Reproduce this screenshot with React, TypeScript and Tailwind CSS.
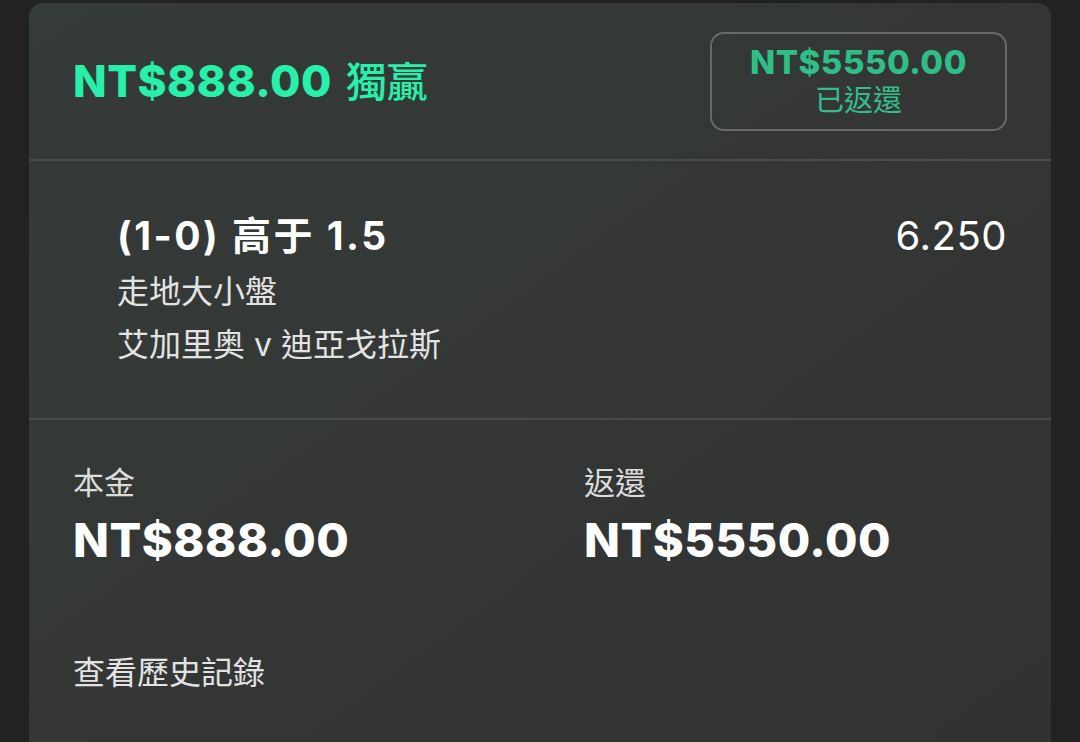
const latin = "font-['Inter','Noto_Sans_CJK_TC',sans-serif]"

export default function App() {
  return (
    <div className="min-h-[742px] w-[1080px] overflow-hidden bg-[#222222] pt-[3px]">
      <div
        className={`mx-[29px] min-h-[739px] rounded-t-[14px] bg-gradient-to-br from-[#353b39] to-[#323232] ${latin}`}
      >
        {/* header */}
        <div className="flex h-[156px] items-center justify-between pl-[44px] pr-[44px]">
          <div className="flex items-baseline gap-[14px] text-[#26f0a9]">
            <span className="text-[44px] font-extrabold tracking-[0.5px]">NT$888.00</span>
            <span className="text-[41px] font-medium">獨贏</span>
          </div>
          <div className="flex h-[99px] w-[297px] flex-col items-center justify-center rounded-[14px] border-2 border-[#666a68]">
            <span className="text-[33px] leading-[38px] font-extrabold tracking-[0.5px] text-[#2fbd88]">
              NT$5550.00
            </span>
            <span className="mt-[2px] text-[29px] leading-[36px] text-[#35bd8b]">已返還</span>
          </div>
        </div>
        <div className="h-[2px] bg-[#474c4a]" />

        {/* selection */}
        <div className="flex h-[257px] justify-between pl-[88px] pr-[44px] pt-[51px]">
          <div className="flex flex-col">
            <span className="text-[39px] leading-[48px] font-bold tracking-[2.5px] text-white">
              (1-0) 高于 1.5
            </span>
            <span className="mt-[8px] text-[32px] leading-[48px] text-[#e3e3e3]">走地大小盤</span>
            <span className="mt-[5px] text-[32px] leading-[48px] text-[#e3e3e3]">艾加里奥 v 迪亞戈拉斯</span>
          </div>
          <span className="text-[40px] leading-[48px] tracking-[0.5px] text-white">6.250</span>
        </div>
        <div className="h-[2px] bg-[#474c4a]" />

        {/* stake / return */}
        <div className="grid grid-cols-2 pt-[41px]">
          <div className="flex flex-col pl-[44px]">
            <span className="text-[31px] leading-[44px] text-[#dcdcdc]">本金</span>
            <span className="mt-[8px] text-[47px] leading-[54px] font-extrabold tracking-[0.5px] text-white">
              NT$888.00
            </span>
          </div>
          <div className="flex flex-col pl-[44px]">
            <span className="text-[31px] leading-[44px] text-[#dcdcdc]">返還</span>
            <span className="mt-[8px] text-[47px] leading-[54px] font-extrabold tracking-[0.5px] text-white">
              NT$5550.00
            </span>
          </div>
        </div>

        <div className="pl-[44px] pt-[84px]">
          <span className="text-[32px] leading-[44px] text-[#e3e3e3]">查看歷史記錄</span>
        </div>
      </div>
    </div>
  )
}
